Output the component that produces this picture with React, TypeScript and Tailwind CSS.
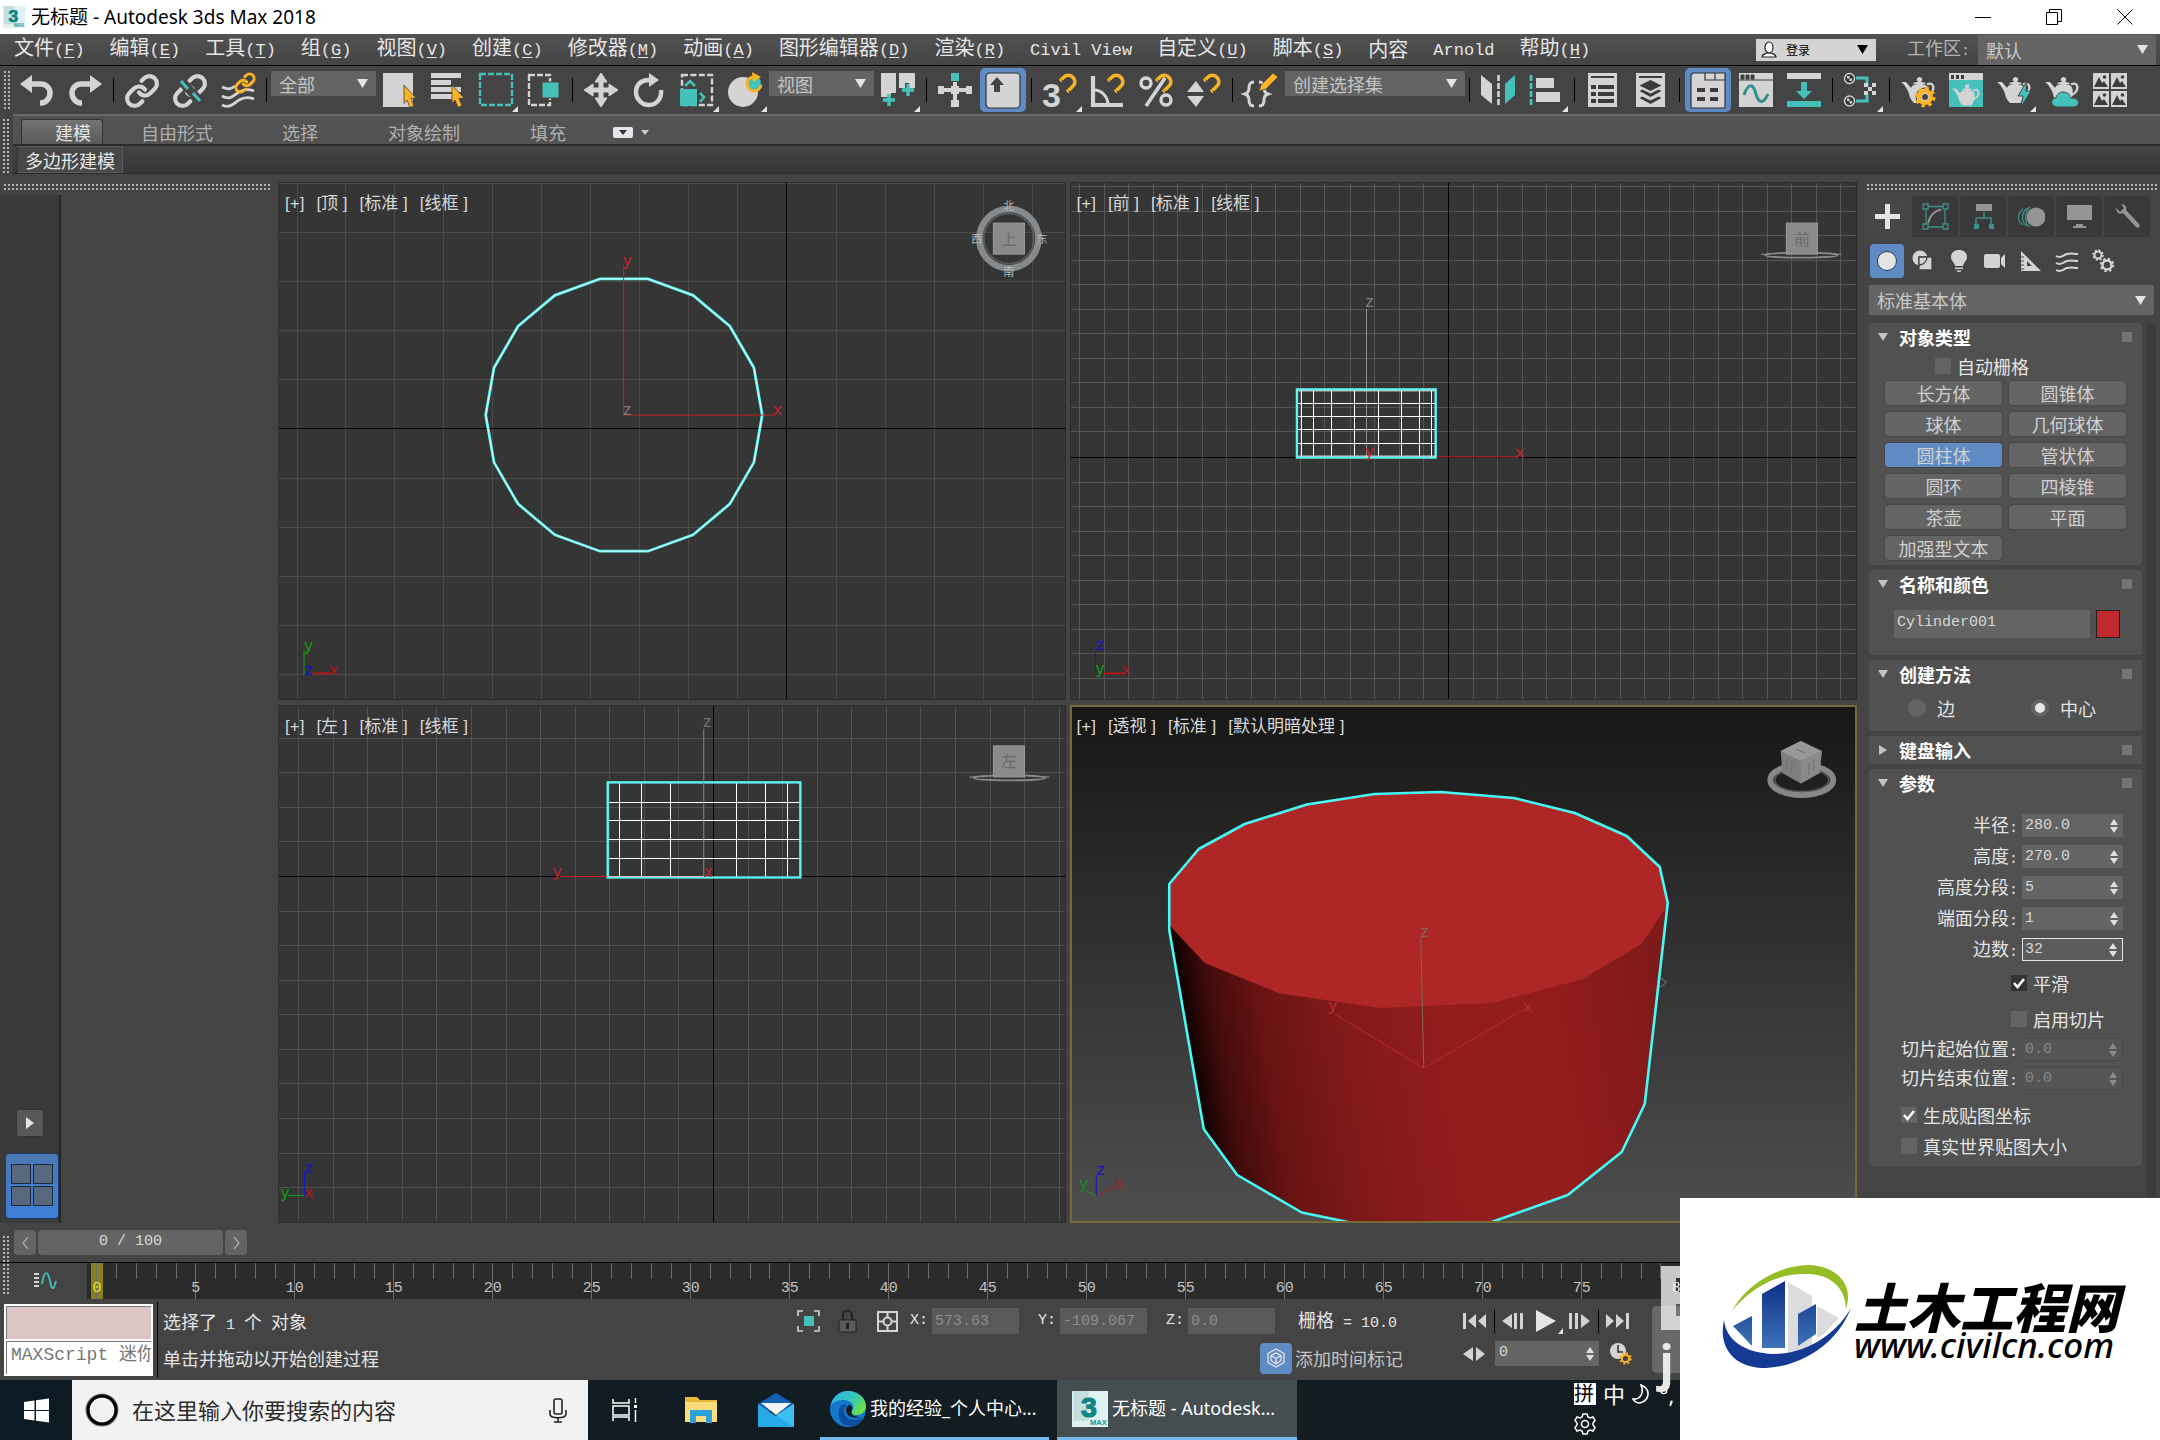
import React, { useState } from "react";
import { Link } from "lucide-react";

const L = "#d4d4d4";
const T = "#45c1bb";
const G = "#fcb424";
const BG = "#444444";

/* ---------- text ---------- */

function Mixed({ text, size = "sm" }: { text: string; size?: "sm" | "md" }) {
  const parts = text.split(/([\x20-\x7e]+)/).filter(Boolean);
  return (
    <span className="whitespace-pre">
      {parts.map((p, i) =>
        /[\x20-\x7e]/.test(p) ? (
          <span
            key={i}
            className={
              size === "md"
                ? "font-['Liberation_Mono',monospace] text-[17px]"
                : "font-['Liberation_Mono',monospace] text-[15px]"
            }
          >
            {p}
          </span>
        ) : (
          p
        )
      )}
    </span>
  );
}

function Dots({ className }: { className: string }) {
  return (
    <div
      className={
        "bg-[radial-gradient(circle,#b4b4b4_1px,transparent_1.5px)] bg-[size:4px_4px] " + className
      }
    />
  );
}

/* ---------- toolbar icons ---------- */

function Icon({ children, flyout }: { children: React.ReactNode; flyout?: boolean }) {
  return (
    <svg width="48" height="46" viewBox="-7 -6 48 46" aria-hidden="true">
      {children}
      {flyout && <path d="M33 39h6v-6Z" fill="#e4e4e4" />}
    </svg>
  );
}

const Magnet = () => (
  <g fill="none" stroke={G} strokeWidth="3.600">
    <path d="M17 8 21 4a6.500 6.500 0 0 1 10 8L24 19" />
    <path d="m25.500 17.500 1.800 2M18.500 6.500l1.500 2" stroke={BG} strokeWidth="1" />
  </g>
);

const Cursor = () => (
  <path d="m21 12 12 13-5 .5 3 7-4 2-3-7.500-3 3.500Z" fill={G} stroke={BG} strokeWidth=".8" />
);

const Pot = ({ fill = L }: { fill?: string }) => (
  <g>
    <circle cx="18.500" cy="6.500" r="2.600" fill={fill} />
    <path d="M12 11c1-3 12-3 13 0Z" fill={fill} />
    <path
      d="M0 9h5l5 6c1-3 4-4 8.500-4s8 1 9 5c1 5-1 10-4 14H13c-3-3-4.500-6-5-9C7 17 4 12 0 9Z"
      fill={fill}
    />
    <path d="M26 11.500c6-3 8 3 5 7-1 2-3 3-5 4" fill="none" stroke={fill} strokeWidth="2.200" />
  </g>
);

const icons: Record<string, React.ReactNode> = {
  undo: (
    <g>
      <path d="M0 11 12 2v18Z" fill={L} />
      <path d="M10 11h11c5 0 9 4 9 9s-4 10-9 10h-1" fill="none" stroke={L} strokeWidth="5.500" />
    </g>
  ),
  redo: (
    <g>
      <path d="M34 11 22 2v18Z" fill={L} />
      <path d="M24 11H13c-5 0-9 4-9 9s4 10 9 10h1" fill="none" stroke={L} strokeWidth="5.500" />
    </g>
  ),
  link: <Link x="-1" y="0" width="36" height="36" color={L} strokeWidth={2.8} />,
  unlink: (
    <g>
      <Link x="-1" y="0" width="36" height="36" color={L} strokeWidth={2.8} />
      <path d="m6 6 22 23" stroke={BG} strokeWidth="9" />
      <path d="m8 8 7 8M20 20l7 8" stroke={T} strokeWidth="3" />
    </g>
  ),
  bind: (
    <g>
      <g fill="none" stroke={L} strokeWidth="2.800">
        <path d="M1 14c7 3 9 2 13-1" />
        <path d="M1 23c8 5 12-1 17-4s10-3 15-1" />
        <path d="M1 32c8 4 12-2 17-5s10-3 15-1" />
      </g>
      <Link x="13" y="-1" width="22" height="22" color={G} strokeWidth={3.2} />
    </g>
  ),
  select: (
    <g>
      <path d="M0 0h30v34H0Z" fill={L} />
      <Cursor />
    </g>
  ),
  selectName: (
    <g>
      <path d="M0 0h30v5H0ZM0 7h20v5H0ZM0 14h30v5H0ZM0 21h22v5H0Z" fill={L} />
      <Cursor />
    </g>
  ),
  rect: (
    <rect x="1" y="1" width="32" height="31" fill="none" stroke={T} strokeWidth="2.400" strokeDasharray="6 2" />
  ),
  window: (
    <g>
      <rect x="2" y="2" width="21" height="30" fill="none" stroke={L} strokeWidth="2.400" strokeDasharray="6 2" />
      <path d="M15 9h17v16H15Z" fill={T} stroke={BG} strokeWidth="1" />
    </g>
  ),
  move: (
    <path
      d="m17 0 6 9h-4v6h6v-4l9 6-9 6v-4h-6v6h4l-6 9-6-9h4v-6H9v4l-9-6 9-6v4h6V9h-4Z"
      fill={L}
      stroke={L}
      strokeWidth="1"
    />
  ),
  rotate: (
    <g>
      <path d="M19 7C9 6 4 12 4 19s6 13 13 13 13-6 12-15" fill="none" stroke={L} strokeWidth="4.500" />
      <path d="m17 0 10 7-10 7Z" fill={L} />
    </g>
  ),
  scale: (
    <g>
      <rect x="2" y="2" width="30" height="30" fill="none" stroke={L} strokeWidth="2.400" strokeDasharray="6 2.400" />
      <path d="M0 16h17v17H0Z" fill={T} />
      <path d="m5 13 5-5 5 5M20 20l4 4-4 5" fill="none" stroke={T} strokeWidth="2.600" />
    </g>
  ),
  place: (
    <g>
      <ellipse cx="15" cy="19" rx="15" ry="15" fill={L} />
      <circle cx="26" cy="10" r="7.500" fill={T} stroke={BG} strokeWidth="1" />
      <path d="M25 4a7 7 0 1 0 8 8" fill="none" stroke={G} strokeWidth="3" />
      <path d="m24-1 9 5-8 5Z" fill={G} />
    </g>
  ),
  pivot: (
    <g>
      <path d="M0 0h15v20h-5v4H0ZM18 0h16v15h-6v-5h-4v5h-6Z" fill={L} />
      <path d="M8 21v12M2 27h12M27 11v12M21 17h12" stroke={T} strokeWidth="3.400" />
    </g>
  ),
  manip: (
    <g fill={L}>
      <path d="M13 0h8v8h-8Z" fill={T} />
      <path d="M15 9h4v20h-4ZM5 15h24v4H5ZM0 13h6v8H0ZM28 13h6v8h-6ZM13 27h8v7h-8ZM13 13h8v8h-8Z" />
    </g>
  ),
  keyToggle: (
    <g>
      <rect x="-6" y="-5" width="46" height="44" rx="5" fill="#5f8bc4" />
      <rect x="0" y="0" width="34" height="35" rx="4" fill={L} stroke="#333" strokeWidth="1.200" />
      <path d="m11 4 7 8h-4v7H8v-7H4Z" fill="#444" />
    </g>
  ),
  snap3: (
    <g>
      <text x="-1" y="34" fill={L} fontSize="34" fontWeight="700" fontFamily="'Liberation Sans', sans-serif">3</text>
      <Magnet />
    </g>
  ),
  angle: (
    <g>
      <path d="M2 3v29h30" fill="none" stroke={L} strokeWidth="4.200" />
      <path d="M3 17c8 0 14 7 14 15" fill="none" stroke={L} strokeWidth="3" />
      <Magnet />
    </g>
  ),
  percent: (
    <g>
      <circle cx="7" cy="10" r="5" fill="none" stroke={L} strokeWidth="3.400" />
      <circle cx="27" cy="27" r="5" fill="none" stroke={L} strokeWidth="3.400" />
      <path d="M7 33 26 5" stroke={L} strokeWidth="3.600" />
      <Magnet />
    </g>
  ),
  spinner: (
    <g>
      <path d="m9 8 8 11H0ZM9 34l8-11H0Z" fill={L} />
      <Magnet />
    </g>
  ),
  named: (
    <g>
      <path
        d="M10 9c-4 0-5 2-5 6 0 3-1 5-4 6 3 1 4 3 4 6 0 4 1 6 5 6M15 9c4 0 5 2 5 6 0 3 1 5 4 6-3 1-4 3-4 6 0 4-1 6-5 6"
        fill="none"
        stroke={L}
        strokeWidth="3"
      />
      <path d="m15 18 2-6L29 0l5 4-12 12Z" fill={G} stroke={BG} strokeWidth=".8" />
    </g>
  ),
  mirror: (
    <g>
      <path d="m0 2 11 9v20L0 22Z" fill={L} />
      <path d="m34 2-10 9v20l10-9Z" fill={T} />
      <path d="M17.500 2v31" stroke={L} strokeWidth="2.600" strokeDasharray="6 2" />
    </g>
  ),
  align: (
    <g>
      <path d="M2 2v31" stroke={T} strokeWidth="2.800" strokeDasharray="6 2" />
      <path d="M7 5h18v10H7ZM7 19h24v10H7Z" fill={L} />
    </g>
  ),
  list: (
    <g>
      <path d="M2 0h29v34H2Z" fill={L} />
      <path d="M5 3h23v2H5ZM5 12h5v4H5ZM12 12h16v4H12ZM5 19h5v4H5ZM12 19h16v4H12ZM5 26h5v4H5ZM12 26h16v4H12Z" fill="#3c3c3c" />
    </g>
  ),
  layers: (
    <g>
      <path d="M2 0h29v34H2Z" fill={L} />
      <path d="M5 3h23v2H5ZM16.500 7l11 5.500-11 5.500-11-5.500ZM5.500 18l3-1.500 8 4 8-4 3 1.500-11 6ZM5.500 25l3-1.500 8 4 8-4 3 1.500-11 6Z" fill="#3c3c3c" />
    </g>
  ),
  ribbon: (
    <g>
      <rect x="-6" y="-5" width="46" height="44" rx="5" fill="#5f8bc4" />
      <path d="M2 0h32v35H0V2Z" fill={L} stroke="#333" strokeWidth="1.200" />
      <path d="M14 0v7h20M24 0v7" fill="none" stroke="#333" strokeWidth="1.200" />
      <path d="M6 15h8v4H6ZM19 15h8v4h-8ZM6 24h8v4H6ZM19 24h8v4h-8Z" fill="#3c3c3c" />
    </g>
  ),
  curve: (
    <g>
      <path d="M0 0h34v34H0Z" fill={L} />
      <path d="M0 7h34M2 2h3v4H2ZM7 2h3v4H7ZM12 2h3v4h-3Z" fill="#3c3c3c" stroke="#3c3c3c" strokeWidth="1" />
      <path d="M5 22c4-12 9-12 12-1s8 9 12 0" fill="none" stroke="#2f8f8a" strokeWidth="3" />
    </g>
  ),
  schematic: (
    <g>
      <path d="M0 0h34v6H0Z" fill={L} />
      <path d="M0 28h34v6H0ZM14 9h6v9h5l-8 8-8-8h5Z" fill={T} />
    </g>
  ),
  material: (
    <g>
      <path d="M12 5h11v8M12 28h11v-7" fill="none" stroke={T} strokeWidth="3" />
      <circle cx="5.500" cy="5.500" r="5" fill="#333" stroke={L} strokeWidth="1.400" />
      <circle cx="5.500" cy="28" r="5" fill="#333" stroke={L} strokeWidth="1.400" />
      <path d="M3 3h2.500v2.500H3ZM5.500 5.500H8V8H5.500ZM3 25.500h2.500V28H3ZM5.500 28H8v2.500H5.500Z" fill={L} />
      <path d="M20 10h4v4h-4ZM28 10h4v4h-4ZM24 14h4v4h-4ZM20 18h4v4h-4ZM28 18h4v4h-4Z" fill={L} />
    </g>
  ),
  renderSetup: (
    <g>
      <Pot />
      <circle cx="24" cy="24" r="9" fill="none" stroke={BG} strokeWidth="1" />
      <circle cx="24" cy="24" r="6" fill={L} stroke={G} strokeWidth="4" />
      <circle cx="24" cy="24" r="9" fill="none" stroke={G} strokeWidth="3" strokeDasharray="3.500 3.570" />
      <circle cx="24" cy="24" r="3" fill="#444" />
    </g>
  ),
  frame: (
    <g>
      <path d="M0 0h34v34H0Z" fill={T} />
      <path d="M0 0h34v7H0Z" fill={L} />
      <path d="M2 2h3v4H2ZM7 2h3v4H7ZM12 2h3v4h-3Z" fill="#3c3c3c" />
      <g transform="translate(3 8) scale(.82)">
        <Pot />
      </g>
    </g>
  ),
  render: (
    <g>
      <Pot />
      <path d="m30 8-9 15h5l-2 11 10-16h-5Z" fill={T} stroke={BG} strokeWidth="1" />
    </g>
  ),
  cloud: (
    <g>
      <Pot />
      <path d="M13 34c-8 0-8-9-2-9 1-8 13-8 15 0 9-1 10 9 2 9Z" fill={T} stroke={BG} strokeWidth="1" />
    </g>
  ),
  gallery: (
    <g>
      {[
        [0, 0],
        [18, 0],
        [0, 18],
        [18, 18],
      ].map(([x, y]) => (
        <g key={x + "-" + y} transform={`translate(${x} ${y})`}>
          <path d="M0 0h16v16H0Z" fill={L} />
          <path d="m1 14 5-10 3 6 2-2 4 6Z" fill="#3c3c3c" />
          <circle cx="11.500" cy="4" r="1.800" fill="#3c3c3c" />
        </g>
      ))}
    </g>
  ),
};

function Tool({ name, label, flyout }: { name: string; label: string; flyout?: boolean }) {
  return (
    <button aria-label={label} className="w-12 shrink-0">
      <Icon flyout={flyout}>{icons[name]}</Icon>
    </button>
  );
}

function Sep() {
  return (
    <div className="flex w-[9px] shrink-0 justify-center">
      <div className="h-6 w-px bg-black" />
    </div>
  );
}

function Dropdown({
  label,
  value,
  className,
  arrow = "#e4e4e4",
}: {
  label: string;
  value: string;
  className: string;
  arrow?: string;
}) {
  return (
    <div className={"relative flex items-center " + className}>
      <select aria-label={label} className="h-full w-full appearance-none bg-transparent pl-2 outline-none">
        <option>{value}</option>
      </select>
      <svg className="pointer-events-none absolute right-2" width="11" height="9" viewBox="0 0 11 9" aria-hidden="true">
        <path d="M0 0h11L5.500 9Z" fill={arrow} />
      </svg>
    </div>
  );
}

/* ---------- header ---------- */

function AppLogo({ size }: { size: number }) {
  return (
    <svg width={size} height={size} viewBox="0 0 24 24" aria-hidden="true">
      <path d="M0 0h24v24H0Z" fill="#dff1f0" />
      <path d="M1 0h10v20H1Z" fill="#c4dfdd" />
      <text x="6" y="17" fill="#0f8586" stroke="#0f8586" strokeWidth=".8" fontSize="19" fontWeight="700" fontFamily="'Liberation Sans', sans-serif">
        3
      </text>
      <text x="12" y="22.500" fill="#0f9a98" fontSize="5" fontWeight="700" fontFamily="'Liberation Sans', sans-serif">
        MAX
      </text>
    </svg>
  );
}

function TitleBar() {
  return (
    <header className="flex h-[34px] items-center bg-white pl-[3px] text-black">
      <AppLogo size={22} />
      <h1 className="ml-[6px] font-['Noto_Sans','Noto_Sans_CJK_SC',sans-serif] text-[19px]">
        无标题 - Autodesk 3ds Max 2018
      </h1>
      <div className="ml-auto flex">
        <button aria-label="最小化" className="flex h-[34px] w-[71px] items-center justify-center">
          <svg width="16" height="16" viewBox="0 0 16 16"><path d="M0 8.500h16" stroke="#000" /></svg>
        </button>
        <button aria-label="还原" className="flex h-[34px] w-[71px] items-center justify-center">
          <svg width="16" height="16" viewBox="0 0 16 16" fill="none" stroke="#000">
            <path d="M.5 3.500h11v12H.5ZM3.500 3.500v-3h12v12h-4" />
          </svg>
        </button>
        <button aria-label="关闭" className="flex h-[34px] w-[71px] items-center justify-center">
          <svg width="16" height="16" viewBox="0 0 16 16"><path d="m.5.5 15 15m0-15-15 15" stroke="#000" /></svg>
        </button>
      </div>
    </header>
  );
}

const menus: [string, string?][] = [
  ["文件", "F"],
  ["编辑", "E"],
  ["工具", "T"],
  ["组", "G"],
  ["视图", "V"],
  ["创建", "C"],
  ["修改器", "M"],
  ["动画", "A"],
  ["图形编辑器", "D"],
  ["渲染", "R"],
  ["Civil View"],
  ["自定义", "U"],
  ["脚本", "S"],
  ["内容"],
  ["Arnold"],
  ["帮助", "H"],
];

function MenuBar() {
  return (
    <nav className="flex h-8 items-start border-b border-black bg-gradient-to-b from-[#525252] to-[#444] pl-[14px] text-[20px] leading-[26px] text-[#e6e6e6]">
      <div className="flex gap-[25px]">
        {menus.map(([name, key]) => (
          <button key={name} className="whitespace-nowrap">
            <Mixed text={name} size="md" />
            {key && (
              <span className="font-['Liberation_Mono',monospace] text-[17px]">
                (<u className="underline-offset-2">{key}</u>)
              </span>
            )}
          </button>
        ))}
      </div>
      <div className="ml-auto flex h-full items-center pr-1 text-[18px]">
        <div className="flex h-[22px] items-center bg-[#d4d4d4] pl-1 text-black">
          <svg width="18" height="18" viewBox="0 0 18 18" fill="#fff" stroke="#222" strokeWidth="1.200" aria-hidden="true">
            <path d="M2 16c0-3 3-3 5-4h4c2 1 5 1 5 4Z" />
            <ellipse cx="9" cy="6.500" rx="4" ry="5.500" />
          </svg>
          <Dropdown label="登录" value="登录" arrow="#000" className="h-full w-[98px] text-[12px] leading-[16px]" />
        </div>
        <label className="ml-[31px] mr-2 text-[#b4b4b4]"><Mixed text="工作区:" /></label>
        <Dropdown label="工作区" value="默认" className="h-[30px] w-[178px] bg-[#646464] text-[#c8c8c8]" />
      </div>
    </nav>
  );
}

function Toolbar() {
  return (
    <div className="flex h-12 items-center overflow-hidden bg-[#444] pl-[3px] text-[18px]">
      <Dots className="mr-[2px] h-10 w-2 shrink-0" />
      <Tool name="undo" label="撤消" />
      <Tool name="redo" label="重做" />
      <Sep />
      <Tool name="link" label="链接" />
      <Tool name="unlink" label="取消链接" />
      <Tool name="bind" label="绑定到空间扭曲" />
      <Sep />
      <Dropdown label="选择过滤器" value="全部" className="mb-[14px] h-[25px] w-[105px] shrink-0 bg-[#646464] text-[#c4c4c4]" />
      <Tool name="select" label="选择对象" />
      <Tool name="selectName" label="按名称选择" />
      <Tool name="rect" label="矩形选择区域" flyout />
      <Tool name="window" label="窗口/交叉" />
      <Sep />
      <Tool name="move" label="移动" />
      <Tool name="rotate" label="旋转" />
      <Tool name="scale" label="缩放" flyout />
      <Tool name="place" label="放置" flyout />
      <Dropdown label="参考坐标系" value="视图" className="mb-[14px] h-[25px] w-[105px] shrink-0 bg-[#646464] text-[#c4c4c4]" />
      <Tool name="pivot" label="使用轴点中心" flyout />
      <Sep />
      <Tool name="manip" label="选择并操纵" />
      <Tool name="keyToggle" label="键盘快捷键覆盖切换" />
      <Sep />
      <Tool name="snap3" label="捕捉开关" flyout />
      <Tool name="angle" label="角度捕捉" />
      <Tool name="percent" label="百分比捕捉" />
      <Tool name="spinner" label="微调器捕捉" />
      <Sep />
      <Tool name="named" label="编辑命名选择集" />
      <Dropdown label="命名选择集" value="创建选择集" className="mb-[14px] h-[25px] w-[180px] shrink-0 bg-[#646464] text-[#c4c4c4]" />
      <Sep />
      <Tool name="mirror" label="镜像" />
      <Tool name="align" label="对齐" flyout />
      <Sep />
      <Tool name="list" label="场景资源管理器" />
      <Tool name="layers" label="层资源管理器" />
      <Sep />
      <Tool name="ribbon" label="显示功能区" />
      <Tool name="curve" label="曲线编辑器" />
      <Tool name="schematic" label="图解视图" />
      <Sep />
      <Tool name="material" label="材质编辑器" flyout />
      <Sep />
      <Tool name="renderSetup" label="渲染设置" />
      <Tool name="frame" label="渲染帧窗口" />
      <Tool name="render" label="渲染产品" flyout />
      <Tool name="cloud" label="在线渲染" />
      <Tool name="gallery" label="打开库" />
    </div>
  );
}

function Ribbon() {
  return (
    <div className="flex bg-[#444] text-[18px] text-[#b0b0b0]">
      <Dots className="ml-[2px] mr-[3px] mt-1 h-[56px] w-2 shrink-0" />
      <div className="min-w-0 flex-1">
        <div className="flex h-8 items-end border-b-2 border-t-2 border-b-[#2c2c2c] border-t-[#6a6a6a] bg-[#525252] pl-2 leading-6">
          <button className="w-[82px] rounded-t-[3px] border border-b-0 border-[#333] bg-gradient-to-b from-[#747474] to-[#5a5a5a] pl-[33px] text-left text-[#e4e4e4]">
            建模
          </button>
          <button className="ml-[38px]">自由形式</button>
          <button className="ml-[69px]">选择</button>
          <button className="ml-[70px]">对象绘制</button>
          <button className="ml-[70px]">填充</button>
          <button aria-label="功能区选项" className="ml-[47px] flex h-6 items-center gap-2">
            <svg width="20" height="11" viewBox="0 0 20 11" aria-hidden="true">
              <rect width="20" height="11" rx="2" fill="#e4e8ee" />
              <path d="M6 3h8l-4 5Z" fill="#333" />
            </svg>
            <svg width="8" height="5" viewBox="0 0 8 5" aria-hidden="true"><path d="M0 0h8L4 5Z" fill="#ccc" /></svg>
          </button>
        </div>
        <div className="flex h-[28px] border-b border-[#2c2c2c] bg-gradient-to-b from-[#444] to-[#363636] pl-1">
          <button className="border border-[#5a5a5a] border-l-[#333] bg-[#484848] px-[7px] leading-[26px] text-[#e6e6e6]">
            多边形建模
          </button>
        </div>
      </div>
    </div>
  );
}

/* ---------- viewports ---------- */

function range(from: number, to: number, origin: number, step: number) {
  const out: number[] = [];
  for (let i = Math.ceil((from - origin) / step); origin + i * step <= to; i++) {
    if (i !== 0) out.push(Math.round(origin + i * step) + 0.5);
  }
  return out;
}

type Box = { x: number; y: number; w: number; h: number };

function Grid({ box, ox, oy, step, color }: { box: Box; ox: number; oy: number; step: number; color: string }) {
  return (
    <g shapeRendering="crispEdges">
      <g stroke={color}>
        {range(box.x, box.x + box.w, ox, step).map((x) => (
          <path key={"v" + x} d={`M${x} ${box.y}v${box.h}`} />
        ))}
        {range(box.y, box.y + box.h, oy, step).map((y) => (
          <path key={"h" + y} d={`M${box.x} ${y}h${box.w}`} />
        ))}
      </g>
      <path
        d={`M${Math.round(ox) + 0.5} ${box.y}v${box.h}M${box.x} ${Math.round(oy) + 0.5}h${box.w}`}
        stroke="#000"
      />
    </g>
  );
}

function Axis({ x, y, color, children }: { x: number; y: number; color: string; children: string }) {
  return (
    <text x={x} y={y} fill={color} textAnchor="middle" fontSize="17" fontFamily="'Liberation Sans', sans-serif">
      {children}
    </text>
  );
}

function CubeFace({ cx, cy, face }: { cx: number; cy: number; face: string }) {
  return (
    <g>
      <rect x={cx - 15.5} y={cy - 15.5} width="31" height="31" fill="#8a8a8a" stroke="#9c9c9c" />
      <text x={cx} y={cy + 6} fill="#666c74" textAnchor="middle" fontSize="16" fontFamily="'Noto Sans CJK SC', sans-serif">
        {face}
      </text>
    </g>
  );
}

function FlatRing({ cx, cy }: { cx: number; cy: number }) {
  return (
    <g>
      <ellipse cx={cx} cy={cy} rx="36" ry="2.500" fill="none" stroke="#8a8a8a" strokeWidth="1.600" />
      <path d={`M${cx - 40} ${cy - 1}h8M${cx + 32} ${cy - 1}h8`} stroke="#9a9a9a" />
    </g>
  );
}

function Viewport({
  box,
  labels,
  active,
  children,
}: {
  box: Box;
  labels: string[];
  active?: boolean;
  children: React.ReactNode;
}) {
  return (
    <section className="relative min-h-0 min-w-0 overflow-hidden bg-[#353535]">
      <svg
        className="absolute inset-0 h-full w-full"
        viewBox={`${box.x} ${box.y} ${box.w} ${box.h}`}
        preserveAspectRatio="xMidYMid slice"
        fill="none"
        aria-hidden="true"
      >
        {children}
      </svg>
      <div
        className={
          active
            ? "absolute inset-0 border-2 border-[#786a38]"
            : "absolute inset-0 border border-[#2c2c2c]"
        }
      />
      <div className="absolute left-[7px] top-[10px] flex gap-3 whitespace-pre font-['Liberation_Sans','Noto_Sans_CJK_SC',sans-serif] text-[17px] leading-6 text-[#d8d8d8]">
        {labels.map((l) => (
          <button key={l}>{l}</button>
        ))}
      </div>
    </section>
  );
}

const RED = "#c4242c";
const CY = "#5ef4f0";

function TopView() {
  const box = { x: 278, y: 183, w: 787, h: 517 };
  const pts = Array.from({ length: 18 }, (_, i) => {
    const a = (i * Math.PI) / 9;
    return `${(623.8 + 138 * Math.cos(a)).toFixed(1)},${(415.6 + 138 * Math.sin(a)).toFixed(1)}`;
  }).join(" ");
  return (
    <Viewport box={box} labels={["[+]", "[顶 ]", "[标准 ]", "[线框 ]"]}>
      <Grid box={box} ox={786} oy={429} step={48.95} color="#4b4b4b" />
      <polygon points={pts} stroke={CY} strokeWidth="2.800" />
      <polygon points={pts} stroke="#e8ffff" strokeWidth=".8" />
      <path d="M623.500 266v149.500H775" stroke={RED} />
      <Axis x={627} y={267} color={RED}>y</Axis>
      <Axis x={777} y={416} color={RED}>x</Axis>
      <Axis x={627} y={416} color="#7a7a7a">z</Axis>
      <path d="M304.500 650v25" stroke="#1a9a1a" />
      <path d="M313 673.500h20" stroke="#b01818" strokeWidth="2" />
      <Axis x={309} y={651} color="#12a012">y</Axis>
      <Axis x={309} y={675} color="#1414c8">z</Axis>
      <Axis x={334} y={675} color="#b01818">x</Axis>
      <circle cx="1008" cy="239.500" r="29.500" stroke="#868a8c" strokeWidth="6.500" />
      <circle cx="1008" cy="239.500" r="25" stroke="#5c6064" strokeWidth="1.500" />
      <CubeFace cx={1008} cy={239.5} face="上" />
      <g fill="#b4b8ba" fontSize="11" textAnchor="middle" fontFamily="'Noto Sans CJK SC', sans-serif">
        <text x="1008" y="211">北</text>
        <text x="1008" y="277">南</text>
        <text x="976" y="244">西</text>
        <text x="1041" y="244">东</text>
      </g>
    </Viewport>
  );
}

function FrontView() {
  const box = { x: 1069, y: 183, w: 788, h: 517 };
  return (
    <Viewport box={box} labels={["[+]", "[前 ]", "[标准 ]", "[线框 ]"]}>
      <Grid box={box} ox={1447} oy={457} step={24.52} color="#565656" />
      <g shapeRendering="crispEdges">
        <g stroke="#fff">
          {[1301.5, 1313.5, 1331.5, 1353.5, 1377.5, 1400.5, 1418.5, 1430.5].map((x) => (
            <path key={x} d={`M${x} 390v68`} />
          ))}
          {[404.5, 417.5, 430.5, 443.5].map((y) => (
            <path key={y} d={`M1297 ${y}h138`} />
          ))}
        </g>
        <path d="M1365.500 310v147" stroke="#909090" />
      </g>
      <rect x="1296.500" y="390" width="138.500" height="68" stroke={CY} strokeWidth="2.400" />
      <path d="M1298 391.500h136M1298 456.500h136" stroke="#fff" strokeWidth=".8" />
      <path d="M1436 457.500h81" stroke={RED} />
      <Axis x={1369} y={308} color="#808080">z</Axis>
      <Axis x={1369} y={457} color={RED}>y</Axis>
      <Axis x={1519} y={458} color={RED}>x</Axis>
      <path d="M1095.500 650v24" stroke="#1414c8" />
      <path d="M1104 673.500h20" stroke="#b01818" strokeWidth="2" />
      <Axis x={1100} y={650} color="#1414c8">z</Axis>
      <Axis x={1100} y={674} color="#12a012">y</Axis>
      <Axis x={1126} y={675} color="#b01818">x</Axis>
      <FlatRing cx={1800} cy={256} />
      <CubeFace cx={1800.5} cy={239.5} face="前" />
    </Viewport>
  );
}

function LeftView() {
  const box = { x: 278, y: 705, w: 787, h: 518 };
  return (
    <Viewport box={box} labels={["[+]", "[左 ]", "[标准 ]", "[线框 ]"]}>
      <Grid box={box} ox={713} oy={876} step={34.58} color="#505050" />
      <g stroke="#fff" shapeRendering="crispEdges">
        {[619.5, 641.5, 670.5, 736.5, 765.5, 787.5].map((x) => (
          <path key={x} d={`M${x} 782v95`} />
        ))}
        {[802.5, 820.5, 839.5, 858.5].map((y) => (
          <path key={y} d={`M608 ${y}h192`} />
        ))}
      </g>
      <rect x="607.500" y="782.500" width="192.500" height="95" stroke={CY} strokeWidth="2.400" />
      <path d="M703.500 729v147" stroke="#8a8a8a" />
      <path d="M608 876.500h96" stroke="#d8b8b8" />
      <path d="M560 876.500h47" stroke={RED} />
      <Axis x={707} y={727} color="#707070">z</Axis>
      <Axis x={557} y={877} color={RED}>y</Axis>
      <Axis x={708} y={877} color={RED}>x</Axis>
      <path d="M304.500 1172v24" stroke="#1414c8" />
      <path d="M288 1195.500h16" stroke="#12a012" />
      <Axis x={309} y={1173} color="#1414c8">z</Axis>
      <Axis x={285} y={1198} color="#12a012">y</Axis>
      <Axis x={309} y={1198} color="#b01818">x</Axis>
      <FlatRing cx={1009} cy={778} />
      <CubeFace cx={1008.5} cy={761.5} face="左" />
    </Viewport>
  );
}

const outline =
  "M1347 1222 1301 1212.500 1236.500 1175 1203 1129 1168.500 930V884L1198 849 1244 824 1306 804.500 1374 794 1440 792 1513 798 1574 813 1626 836 1659 867 1667 903 1644 1104 1621 1152 1567 1195 1491 1222";

function PerspectiveView() {
  const box = { x: 1069, y: 705, w: 788, h: 518 };
  return (
    <Viewport box={box} labels={["[+]", "[透视 ]", "[标准 ]", "[默认明暗处理 ]"]} active>
      <defs>
        <linearGradient id="sky" x1="0" y1="0" x2="0" y2="1">
          <stop offset="0" stopColor="#171716" />
          <stop offset=".5" stopColor="#333333" />
          <stop offset="1" stopColor="#4e4e4e" />
        </linearGradient>
        <linearGradient id="side" gradientUnits="userSpaceOnUse" x1="1184" y1="1030" x2="1665" y2="948">
          <stop offset="0" stopColor="#050000" />
          <stop offset=".02" stopColor="#1c0404" />
          <stop offset=".06" stopColor="#400b0b" />
          <stop offset=".16" stopColor="#681313" />
          <stop offset=".28" stopColor="#7c1818" />
          <stop offset=".4" stopColor="#8a1b1b" />
          <stop offset=".55" stopColor="#931d1d" />
          <stop offset=".75" stopColor="#931c1c" />
          <stop offset="1" stopColor="#7c1919" />
        </linearGradient>
      </defs>
      <rect x={box.x} y={box.y} width={box.w} height={box.h} fill="url(#sky)" />
      <path d={outline + "Z"} fill="url(#side)" />
      <path
        d="M1168.500 925V884L1198 849 1244 824 1306 804.500 1374 794 1440 792 1513 798 1574 813 1626 836 1659 867 1667 905 1641 944 1581 979.500 1491 1003 1380 1008 1279 993.500 1204 963Z"
        fill="#ae2626"
      />
      <path d={outline} stroke="#45fbf6" strokeWidth="2.600" strokeLinejoin="round" />
      <path d="m1423 1068-3-131" stroke="#7c6a5a" />
      <path d="m1334 1014 89 54 102-60" stroke="#b82a2a" />
      <Axis x={1424} y={937} color="#7e6460">z</Axis>
      <Axis x={1332} y={1011} color="#b83030">y</Axis>
      <Axis x={1527} y={1012} color="#a83030">x</Axis>
      <path d="m1660 978 6 4.500-7 5" stroke="#7a7a7a" />
      <path d="M1095.500 1175v21" stroke="#1414c8" />
      <path d="m1085 1190 10 6" stroke="#12a012" />
      <path d="m1096 1196 19-10" stroke="#b01818" />
      <Axis x={1100} y={1175} color="#1414c8">z</Axis>
      <Axis x={1083} y={1189} color="#1c8a2c">y</Axis>
      <Axis x={1119} y={1189} color="#b02020">x</Axis>
      <ellipse cx="1801" cy="780" rx="31.500" ry="15" stroke="#85878a" strokeWidth="6" />
      <ellipse cx="1801" cy="780" rx="27" ry="11.500" stroke="#585b60" strokeWidth="1.500" />
      <path d="m1800 741 21 10-2 22-19 10.500-18.500-10.500-1.500-22Z" fill="#7e7e7e" />
      <path d="m1800 741 21 10-21 10-20-10Z" fill="#989898" />
      <path d="m1800 761 21-10-2 22-19 10.500Z" fill="#8a8a8a" />
      <path d="M1786 758v12M1791 760v13M1808 762v13M1813 759v12M1795 749l9 4" stroke="#6c7074" />
    </Viewport>
  );
}

/* ---------- left strip ---------- */

function LeftPanel() {
  return (
    <aside className="flex w-[278px] shrink-0 flex-col pl-[3px] pr-2 pt-[9px]">
      <Dots className="h-2 w-full" />
      <div className="-ml-[3px] mt-1 flex w-[61px] flex-1 flex-col items-end border-r-2 border-[#262626] bg-[#3a3a3a]">
        <div className="flex-1" />
        <button aria-label="展开" className="mr-[15px] flex h-7 w-7 items-center justify-center rounded-[3px] border border-[#333] bg-[#585858]">
          <svg width="8" height="12" viewBox="0 0 8 12"><path d="m0 0 8 6-8 6Z" fill="#e4e4e4" /></svg>
        </button>
        <button
          aria-label="视口布局"
          className="mb-1 mt-4 grid h-[66px] w-[54px] grid-cols-2 gap-[2px] rounded-[4px] border border-[#1a3a6a] bg-gradient-to-b from-[#4a78b4] to-[#3f7fd8] px-[5px] pb-[13px] pt-[10px]"
        >
          {[0, 1, 2, 3].map((i) => (
            <span key={i} className="h-5 border border-[#1f2a38] bg-[#56687e]" />
          ))}
        </button>
      </div>
    </aside>
  );
}

/* ---------- command panel ---------- */

function Rollout({
  title,
  open = true,
  className = "",
  children,
}: {
  title: string;
  open?: boolean;
  className?: string;
  children?: React.ReactNode;
}) {
  return (
    <section className={"rounded-[3px] bg-[#515151] " + className}>
      <button aria-expanded={open} className="flex h-7 w-full items-center pl-[9px] pr-[10px]">
        <svg width="10" height="10" viewBox="0 0 10 10" aria-hidden="true">
          <path d={open ? "M0 1h10L5 9Z" : "M1 0v10l8-5Z"} fill="#c4c4c4" />
        </svg>
        <span className="ml-[11px] text-[18px] font-bold text-white">{title}</span>
        <span className="ml-auto h-[10px] w-[10px] bg-[radial-gradient(circle,#8c8c8c_0.5px,transparent_1px)] bg-[size:2px_2px]" />
      </button>
      {children}
    </section>
  );
}

function Check({ label, checked, dark, className = "" }: { label: string; checked?: boolean; dark?: boolean; className?: string }) {
  return (
    <label className={"flex h-5 items-center gap-[6px] text-[18px] text-[#e4e4e4] " + className}>
      <span className="relative flex">
        <input
          type="checkbox"
          defaultChecked={checked}
          className={"peer h-4 w-4 appearance-none " + (dark ? "bg-[#333]" : "bg-[#646464]")}
        />
        <svg
          className="pointer-events-none absolute left-[2px] top-[2px] hidden peer-checked:block"
          width="12"
          height="12"
          viewBox="0 0 12 12"
          aria-hidden="true"
        >
          <path d="m1 6 3.500 4L11 2" fill="none" stroke="#fff" strokeWidth="2.600" />
        </svg>
      </span>
      {label}
    </label>
  );
}

function SpinArrows({ dim }: { dim?: boolean }) {
  const fill = dim ? "#8a8a8a" : "#e0e0e0";
  return (
    <span className="flex flex-col gap-[2px]">
      <button aria-label="增加"><svg className="block" width="8" height="6" viewBox="0 0 8 6"><path d="M4 0l4 6H0Z" fill={fill} /></svg></button>
      <button aria-label="减少"><svg className="block" width="8" height="6" viewBox="0 0 8 6"><path d="M4 6l4-6H0Z" fill={fill} /></svg></button>
    </span>
  );
}

function Spin({ id, label, value, dim, focus }: { id: string; label: string; value: string; dim?: boolean; focus?: boolean }) {
  const [v, setV] = useState(value);
  return (
    <div className="flex h-[23px] items-center justify-end">
      <label htmlFor={id} className="mr-1 text-[18px] text-[#e4e4e4]"><Mixed text={label} /></label>
      <div
        className={
          "flex h-full w-[101px] items-center pr-[5px] " +
          (focus
            ? "border border-[#e4e4e4] bg-[#5c5c5c] pl-[2px]"
            : dim
              ? "border border-[#4a4a4a] bg-[#555] pl-[2px]"
              : "bg-[#646464] pl-[3px]")
        }
      >
        <input
          id={id}
          value={v}
          onChange={(e) => setV(e.target.value)}
          className={
            "min-w-0 flex-1 bg-transparent font-['Liberation_Mono',monospace] text-[15px] leading-5 outline-none " +
            (dim ? "text-[#8a8a8a]" : "text-[#d8d8d8]")
          }
        />
        <SpinArrows dim={dim} />
      </div>
    </div>
  );
}

const primitives = ["长方体", "圆锥体", "球体", "几何球体", "圆柱体", "管状体", "圆环", "四棱锥", "茶壶", "平面", "加强型文本"];

const tabs: [string, React.ReactNode][] = [
  ["创建", <path key="a" d="M10 0h5v10h10v5H15v10h-5V15H0v-5h10Z" fill="#e4e4e4" />],
  [
    "修改",
    <g key="b" fill="none" stroke="#3f8f8b" strokeWidth="1.300">
      <path d="M3 5v16M22 5v16M5 2.500h15M5 23h15" />
      <path d="M0 0h5v5H0ZM20 0h5v5h-5ZM0 20h5v5H0ZM20 20h5v5h-5Z" fill="#393939" />
      <path d="M5 19C7 11 11 7 18 5.500" stroke="#959595" strokeWidth="2" />
    </g>,
  ],
  [
    "层次",
    <g key="c">
      <path d="M5 0h16v7H5Z" fill="#959595" />
      <path d="M13 8v6M5 20v-6h15v6" fill="none" stroke="#3f8f8b" strokeWidth="1.500" />
      <path d="M3 20h5v5H3ZM18 20h5v5h-5Z" fill="#3f8f8b" />
    </g>,
  ],
  [
    "运动",
    <g key="d">
      <path d="M8 4C2 9 2 18 8 22M4 5C-2 10-2 17 4 21M11 3C5 8 5 19 11 23" fill="none" stroke="#3f8f8b" strokeWidth="1.300" />
      <circle cx="17" cy="13" r="9.500" fill="#959595" />
    </g>,
  ],
  ["显示", <path key="e" d="M0 1h25v15H0ZM9 20h7v2h3v2H6v-2h3Z" fill="#959595" />],
  [
    "实用程序",
    <path
      key="f"
      d="M1 4c0 4 3 7 7 5l13 14c2 2 5 0 3-3L11 6c1-3-1-6-5-6l3 4-4 4Z"
      fill="#959595"
    />,
  ],
];

const categories: [string, React.ReactNode][] = [
  ["几何体", <circle key="a" cx="12" cy="12" r="9.500" fill="#e4e4e4" stroke="#2c3f58" strokeWidth="1" />],
  [
    "图形",
    <g key="b">
      <circle cx="9" cy="9" r="7.500" fill={L} />
      <path d="M8 8h13v13H8Z" fill={L} stroke={BG} strokeWidth="1.300" />
      <path d="M8 16V8h8a8 8 0 0 1-8 8Z" fill={L} stroke={BG} strokeWidth="1.300" />
    </g>,
  ],
  ["灯光", <path key="c" d="M12 1c5 0 8 3 8 7s-4 6-4 9H8C8 14 4 12 4 8s3-7 8-7ZM8 18.500h8V20H8ZM9 21.500h6L13 23h-2Z" fill={L} />],
  ["摄影机", <path key="d" d="M3 5h12c1 0 2 1 2 2v10c0 1-1 2-2 2H3c-1 0-2-1-2-2V7c0-1 1-2 2-2ZM18 9l4-4v14l-4-4Z" fill={L} />],
  [
    "辅助对象",
    <g key="e">
      <path d="M2 2l20 20H2Zm6 10v5h5Z" fill={L} fillRule="evenodd" />
      <path d="M2 8h3M2 12h3M2 16h3M2 20h3" stroke={BG} strokeWidth="1.200" />
    </g>,
  ],
  [
    "空间扭曲",
    <path key="f" d="M1 7c5 3 7-1 11-2s7 0 11 0M1 14c5 3 7-1 11-2s7 0 11 0M1 21c5 3 7-1 11-2s7 0 11 0" fill="none" stroke={L} strokeWidth="2" />,
  ],
  [
    "系统",
    <g key="g" fill="none" stroke={L}>
      <circle cx="7" cy="6" r="3.500" strokeWidth="2" />
      <circle cx="7" cy="6" r="5" strokeWidth="1.500" strokeDasharray="2 1.900" />
      <circle cx="16" cy="16" r="4.500" strokeWidth="2.500" />
      <circle cx="16" cy="16" r="6.300" strokeWidth="1.800" strokeDasharray="2.500 2.450" />
    </g>,
  ],
];

function CommandPanel() {
  return (
    <aside className="flex w-[303px] shrink-0 flex-col pl-[9px] pt-[9px]">
      <Dots className="h-2 w-[292px]" />
      <div className="-ml-[2px] mt-[5px] flex h-[41px]" role="tablist">
        {tabs.map(([name, icon], i) => (
          <button
            key={name}
            role="tab"
            aria-selected={i === 0}
            aria-label={name}
            className={
              "mr-[2px] flex w-[46px] items-center justify-center rounded-t-[4px] " +
              (i === 0 ? "bg-[#464646]" : "bg-[#393939]")
            }
          >
            <svg width="27" height="27" viewBox="-1 -1 27 27">{icon}</svg>
          </button>
        ))}
      </div>
      <div className="flex h-12 items-center pl-1">
        {categories.map(([name, icon], i) => (
          <button
            key={name}
            aria-label={name}
            className={
              "mr-[2px] flex h-[34px] w-[34px] items-center justify-center rounded-[4px] " +
              (i === 0 ? "bg-[#5f8bc4]" : "")
            }
          >
            <svg width="24" height="24" viewBox="0 0 24 24">{icon}</svg>
          </button>
        ))}
      </div>
      <Dropdown label="类别" value="标准基本体" className="ml-[3px] mr-[6px] h-[30px] bg-[#646464] text-[18px] text-[#c8c8c8]" />
      <div className="mt-2 flex flex-1 pl-[3px]">
        <div className="flex w-[273px] flex-col gap-[5px]">
          <Rollout title="对象类型" className="pb-[5px]">
            <Check label="自动栅格" className="mb-[4px] mt-[5px] ml-[66px]" />
            <div className="mx-4 grid grid-cols-2 gap-[7px] pt-px">
              {primitives.map((p) => (
                <button
                  key={p}
                  className={
                    "h-6 rounded-[4px] text-[18px] leading-6 text-[#d0d0d0] shadow-[0_0_0_1px_#484848] " +
                    (p === "圆柱体" ? "bg-[#5f8bc4]" : "bg-[#646464]")
                  }
                >
                  {p}
                </button>
              ))}
            </div>
          </Rollout>
          <Rollout title="名称和颜色" className="pb-[17px]">
            <div className="mt-3 flex pl-[25px]">
              <input
                aria-label="名称"
                defaultValue="Cylinder001"
                className="h-7 w-[196px] bg-[#646464] px-[3px] pb-1 font-['Liberation_Mono',monospace] text-[15px] leading-5 text-[#d8d8d8] outline-none"
              />
              <button aria-label="颜色" className="ml-[6px] h-7 w-6 border border-[#222] bg-[#c02a2e]" />
            </div>
          </Rollout>
          <Rollout title="创建方法">
            <div className="flex h-[43px] items-center pb-[3px] text-[18px] text-[#e4e4e4]">
              <label className="flex w-[124px] items-center gap-[11px] pl-[39px]">
                <input type="radio" name="method" className="h-[18px] w-[18px] appearance-none rounded-full bg-[#646464]" />
                边
              </label>
              <label className="flex items-center gap-[11px] pl-[38px]">
                <input
                  type="radio"
                  name="method"
                  defaultChecked
                  className="h-[18px] w-[18px] appearance-none rounded-full border-4 border-[#646464] checked:bg-[#e8e8e8]"
                />
                中心
              </label>
            </div>
          </Rollout>
          <Rollout title="键盘输入" open={false} />
          <Rollout title="参数" className="pb-[10px]">
            <div className="flex flex-col pr-[19px] pt-[17px]">
              <div className="flex flex-col gap-2">
                <Spin id="radius" label="半径:" value="280.0" />
                <Spin id="height" label="高度:" value="270.0" />
                <Spin id="hseg" label="高度分段:" value="5" />
                <Spin id="cseg" label="端面分段:" value="1" />
                <Spin id="sides" label="边数:" value="32" focus />
              </div>
              <Check label="平滑" checked dark className="ml-[142px] mt-3" />
              <Check label="启用切片" className="ml-[142px] mt-4" />
              <div className="mt-[9px] flex flex-col gap-[6px]">
                <Spin id="from" label="切片起始位置:" value="0.0" dim />
                <Spin id="to" label="切片结束位置:" value="0.0" dim />
              </div>
              <Check label="生成贴图坐标" checked className="ml-8 mt-[15px]" />
              <Check label="真实世界贴图大小" className="ml-8 mt-[11px]" />
            </div>
          </Rollout>
        </div>
        <div className="ml-1 w-[10px] bg-[#3c3c3c]" />
      </div>
    </aside>
  );
}

/* ---------- time line and status ---------- */

function TimeSlider() {
  return (
    <div className="flex h-[39px] items-center gap-[2px] bg-[#444] pl-[14px] text-[#d8d8d8]">
      <button aria-label="上一帧" className="flex h-[25px] w-[22px] items-center justify-center rounded-[4px] bg-[#646464]">
        <svg width="7" height="12" viewBox="0 0 7 12"><path d="M6 0 1 6l5 6" fill="none" stroke="#aaa" strokeWidth="1.300" /></svg>
      </button>
      <button className="h-[25px] w-[185px] rounded-[4px] bg-[#646464] font-['Liberation_Mono',monospace] text-[15px]">
        0 / 100
      </button>
      <button aria-label="下一帧" className="flex h-[25px] w-[22px] items-center justify-center rounded-[4px] bg-[#646464]">
        <svg width="7" height="12" viewBox="0 0 7 12"><path d="m1 0 5 6-5 6" fill="none" stroke="#aaa" strokeWidth="1.300" /></svg>
      </button>
    </div>
  );
}

function TimeLine() {
  return (
    <div className="flex h-[37px] border-t border-black bg-[#444]">
      <button aria-label="打开迷你曲线编辑器" className="flex w-[87px] items-center pl-[33px]">
        <svg width="24" height="18" viewBox="0 0 24 18">
          <path d="M1 1h5v2H1ZM1 5h5v2H1ZM1 9h5v2H1ZM1 13h5v2H1Z" fill={L} />
          <path d="M9 12c2-14 6-14 8-3s4 8 6 0" fill="none" stroke={T} strokeWidth="1.800" />
        </svg>
      </button>
      <div className="flex flex-1 bg-[#2b2b2b] pr-[74px]">
        {Array.from({ length: 101 }, (_, i) => (
          <div key={i} className="relative flex min-w-0 flex-1 flex-col items-center">
            {i === 0 && <span className="absolute inset-y-0 left-1 w-3 bg-[#87801c]" />}
            <span className={"relative w-px bg-[#6c6c6c] " + (i % 5 === 0 ? "h-full" : "h-4")} />
            {i % 5 === 0 && i <= 80 && (
              <span
                className={
                  "absolute bottom-0 font-['Liberation_Mono',monospace] text-[15px] leading-[20px] " +
                  (i === 0 ? "text-[#e6dc3c]" : i === 80 ? "z-10 text-[#f0f0f0]" : "text-[#c4c4c4]")
                }
              >
                {i}
              </span>
            )}
          </div>
        ))}
      </div>
    </div>
  );
}

function Coord({ axis, value }: { axis: string; value: string }) {
  return (
    <label className="mr-[19px] flex items-center gap-1 font-['Liberation_Mono',monospace] text-[15px] text-[#e4e4e4]">
      {axis}:
      <input
        defaultValue={value}
        className="h-[26px] w-[87px] bg-[#5a5a5a] px-[3px] text-[15px] text-[#8e8e8e] outline-none"
      />
    </label>
  );
}

function StatusBar() {
  return (
    <div className="flex h-[81px] bg-[#444] text-[18px] text-[#e4e4e4]">
      <div className="ml-1 mt-[5px] flex h-[72px] w-[149px] flex-col gap-[2px] border-2 border-white bg-white">
        <div className="h-[33px] border-l border-t border-[#777] bg-[#dcc5c5]" />
        <input
          aria-label="MAXScript 迷你侦听器"
          defaultValue="MAXScript 迷你侦听器"
          className="h-[33px] w-full border-l border-t border-[#777] bg-white pb-3 pl-1 font-['Liberation_Mono','Noto_Sans_CJK_SC',monospace] text-[18px] leading-5 text-[#777] outline-none"
        />
      </div>
      <div className="ml-1 mt-[3px] h-[75px] w-px bg-black" />
      <div className="ml-[5px] flex w-[634px] flex-col gap-[13px] pt-[10px]">
        <p className="h-6 leading-6"><Mixed text="选择了 1 个 对象" /></p>
        <p className="h-6 leading-6">单击并拖动以开始创建过程</p>
      </div>
      <div className="flex w-[666px] flex-col">
        <div className="mt-[9px] flex h-[26px] items-center">
          <button aria-label="孤立当前选择切换" className="mr-[18px]">
            <svg className="block" width="23" height="22" viewBox="0 0 23 22" fill="none" stroke={L} strokeWidth="1.600">
              <path d="M1 6V1h5M17 1h5v5M22 16v5h-5M6 21H1v-5" />
              <path d="M7 6h10v10H7Z" fill={T} stroke="none" />
            </svg>
          </button>
          <button aria-label="选择锁定切换" className="mr-5">
            <svg className="block" width="19" height="24" viewBox="0 0 19 24">
              <path d="M5 11V6c0-6 9-6 9 0v5" fill="none" stroke="#222" strokeWidth="2" />
              <path d="M1 11h17v12H1Z" fill="#5a5a5a" stroke="#222" />
              <path d="M8 14h3v6H8Z" fill="#222" />
            </svg>
          </button>
          <button aria-label="绝对模式变换输入" className="mr-3">
            <svg className="block" width="21" height="21" viewBox="0 0 21 21" fill="none" stroke={L} strokeWidth="2">
              <path d="M1 1h19v19H1ZM10.500 1v5M10.500 15v5M1 10.500h5M15 10.500h5" />
              <circle cx="10.500" cy="10.500" r="4" />
            </svg>
          </button>
          <Coord axis="X" value="573.63" />
          <Coord axis="Y" value="-109.067" />
          <Coord axis="Z" value="0.0" />
          <span className="ml-1 whitespace-nowrap"><Mixed text="栅格 = 10.0" /></span>
        </div>
        <div className="mt-2 flex h-8 items-center pl-[463px] text-[#c4c4c4]">
          <button aria-label="自适应降级" className="flex h-[31px] w-8 items-center justify-center rounded-[4px] bg-[#5f8bc4]">
            <svg width="20" height="20" viewBox="0 0 20 20" fill="none" stroke="#e4e4e4" strokeWidth="1.300">
              <path d="m10 1 8 4.500v9L10 19l-8-4.500v-9Z" />
              <path d="m5 7.500 5 3 5-3M10 10.500V16M5 7.500v5l5 3.500 5-3.500v-5l-5-2.500Z" />
            </svg>
          </button>
          <button className="ml-[3px] whitespace-nowrap">添加时间标记</button>
        </div>
      </div>
      <div className="flex w-[190px] flex-col">
        <div className="mt-2 flex h-[28px] items-center">
          <button aria-label="转至开头"><svg className="block" width="24" height="16" viewBox="0 0 24 16"><path d="M0 0h3v16H0ZM13 1v14L5 8ZM23 1v14l-8-7Z" fill={L} /></svg></button>
          <span className="mx-[7px] h-6 w-px bg-black" />
          <button aria-label="上一帧"><svg className="block" width="22" height="16" viewBox="0 0 22 16"><path d="M10 1v14L0 8ZM12 0h3v16h-3ZM18 0h3v16h-3Z" fill={L} /></svg></button>
          <button aria-label="播放动画" className="ml-3"><svg className="block" width="28" height="28" viewBox="0 0 28 28"><path d="M0 3 20 14 0 25ZM22 27h5v-6Z" fill="#e4e4e4" /></svg></button>
          <button aria-label="下一帧" className="ml-[5px]"><svg className="block" width="22" height="16" viewBox="0 0 22 16"><path d="M0 0h3v16H0ZM6 0h3v16H6ZM12 1v14l9-7Z" fill={L} /></svg></button>
          <span className="mx-[7px] h-6 w-px bg-black" />
          <button aria-label="转至结尾"><svg className="block" width="24" height="16" viewBox="0 0 24 16"><path d="M0 1v14l8-7ZM10 1v14l8-7ZM20 0h3v16h-3Z" fill={L} /></svg></button>
        </div>
        <div className="mt-[6px] flex h-[25px] items-center">
          <button aria-label="关键点模式切换"><svg className="block" width="24" height="14" viewBox="0 0 24 14"><path d="M10 0v14L0 7ZM13 0v14l9-7Z" fill={L} /></svg></button>
          <div className="ml-2 flex h-[25px] w-[104px] items-center bg-[#646464] pl-1 pr-[5px]">
            <input
              aria-label="当前帧"
              defaultValue="0"
              className="min-w-0 flex-1 bg-transparent font-['Liberation_Mono',monospace] text-[15px] text-[#d8d8d8] outline-none"
            />
            <SpinArrows />
          </div>
          <button aria-label="时间配置" className="ml-[11px]">
            <svg className="block" width="22" height="22" viewBox="0 0 22 22">
              <circle cx="8" cy="8" r="8" fill={L} />
              <path d="M8 2v7h5" fill="none" stroke="#333" strokeWidth="1.600" />
              <circle cx="15.500" cy="15.500" r="3.600" fill={BG} stroke={G} strokeWidth="2" />
              <circle cx="15.500" cy="15.500" r="5.300" fill="none" stroke={G} strokeWidth="1.800" strokeDasharray="2 2.160" />
            </svg>
          </button>
        </div>
      </div>
    </div>
  );
}

/* ---------- task bar ---------- */

function TaskBar() {
  return (
    <footer className="flex h-[60px] bg-gradient-to-r from-[#0c1a24] via-[#141d22] to-[#121a20] font-['Noto_Sans','Noto_Sans_CJK_SC',sans-serif] text-white">
      <button aria-label="开始" className="flex w-[72px] items-center justify-center">
        <svg width="25" height="25" viewBox="0 0 25 25" fill="#fff">
          <path d="M0 4 10.500 2.500V12H0ZM12 2.300 25 .5V12H12ZM0 13h10.500v9.500L0 21ZM12 13h13v11.500L12 22.700Z" />
        </svg>
      </button>
      <label className="flex w-[516px] items-center bg-[#f2f2f2] pl-[13px] pr-[21px]">
        <svg width="34" height="34" viewBox="0 0 34 34" fill="none" aria-hidden="true">
          <circle cx="17" cy="17" r="14.500" stroke="#777" strokeWidth="4" />
          <circle cx="17" cy="17" r="14" stroke="#000" strokeWidth="3" />
        </svg>
        <input
          aria-label="搜索"
          placeholder="在这里输入你要搜索的内容"
          className="ml-[13px] min-w-0 flex-1 bg-transparent text-[22px] outline-none placeholder:text-[#2c2c2c]"
        />
        <svg width="18" height="25" viewBox="0 0 18 25" fill="none" stroke="#222" strokeWidth="1.600" aria-hidden="true">
          <rect x="5" y="1" width="8" height="15" rx="2" />
          <path d="M1 12v4c0 5 16 5 16 0v-4M9 20v4M5 24h8" />
        </svg>
      </label>
      <button aria-label="任务视图" className="ml-6 self-center">
        <svg width="25" height="24" viewBox="0 0 25 24" fill="none" stroke="#fff" strokeWidth="1.500">
          <path d="M1 1v4h16V1M1 8h16v9H1ZM1 23v-4h16v4M23.500 0v5M23.500 12v12" />
          <path d="M22 7h3v3h-3Z" fill="#fff" stroke="none" />
        </svg>
      </button>
      <button aria-label="文件资源管理器" className="ml-12 self-center">
        <svg width="33" height="28" viewBox="0 0 33 28">
          <path d="M0 1h12l3 3h17v22H0Z" fill="#e8b93e" />
          <path d="M0 6h32v20H0Z" fill="#fbdc7c" />
          <path d="M5 14h22v13h-6v-7H11v7H5Z" fill="#2ca2dc" />
        </svg>
      </button>
      <button aria-label="邮件" className="ml-[40px] self-center">
        <svg width="36" height="34" viewBox="0 0 36 34">
          <path d="M0 11 18 0l18 11v7H0Z" fill="#1261b4" />
          <path d="M0 11l18 12 18-12v23H0Z" fill="#27a9e6" />
          <path d="M3 10h30l-15 12Z" fill="#f4f4f4" />
          <path d="m18 22 18 12V11Z" fill="#3cc0f2" />
        </svg>
      </button>
      <button className="ml-[26px] flex w-[229px] items-center border-b-[3px] border-[#76b9ed] pl-[10px] text-[18px]">
        <svg width="36" height="36" viewBox="0 0 36 36" aria-hidden="true">
          <defs>
            <linearGradient id="edge-a" x1="0" y1="0" x2="1" y2=".6">
              <stop offset="0" stopColor="#2ab2e8" />
              <stop offset=".6" stopColor="#35c8b8" />
              <stop offset="1" stopColor="#6ae04a" />
            </linearGradient>
          </defs>
          <circle cx="18" cy="18" r="18" fill="#1477cc" />
          <path d="M1 14C3 5 10 0 18 0c10 0 18 7 18 15 0 6-5 9-9 9-5 0-7-2-5-4 4-5-1-11-8-11C8 9 3 11 1 14Z" fill="url(#edge-a)" />
          <path d="M14 13c-6 2-8 13-1 20 8 5 16 1 20-6-8 4-19 2-19-7 0-3 1-5 3-6Z" fill="#0d4f9c" />
          <path d="M19 14c-4 2-4 8 0 11 4 2 8 2 11 1-9 0-9-5-8-7 1-3-1-5-3-5Z" fill="#141d22" />
        </svg>
        <span className="ml-1 whitespace-nowrap">我的经验_个人中心...</span>
      </button>
      <button className="ml-2 flex w-[240px] items-center border-b-[3px] border-[#76b9ed] bg-[#444d50] pl-[15px] text-[18px]">
        <AppLogo size={36} />
        <span className="ml-1 whitespace-nowrap">无标题 - Autodesk...</span>
      </button>
      <div className="ml-[277px] flex flex-col pt-[3px]">
        <div className="flex items-center gap-[7px] whitespace-nowrap text-[22px] leading-[22px]">
          <span className="w-[22px] bg-white text-[20px] text-black">拼</span>
          <span>中</span>
          <svg width="20" height="20" viewBox="0 0 20 20" fill="none" stroke="#fff" strokeWidth="1.600" aria-hidden="true">
            <path d="M9 1c10 4 9 15-1 18-4 0-6-2-7-4 8 1 11-7 8-14Z" />
          </svg>
          <span>°,</span>
        </div>
        <button aria-label="设置" className="mt-2 w-[22px]">
          <svg width="22" height="22" viewBox="0 0 22 22" fill="none" stroke="#fff" strokeWidth="1.500">
            <path d="M9 1h4l1 3 2 1 3-1 2 3.500L19 10v2l2 2.500-2 3.500-3-1-2 1-1 3H9l-1-3-2-1-3 1-2-3.500L3 12v-2L1 7.500 3 4l3 1 2-1Z" />
            <circle cx="11" cy="11" r="3.500" />
          </svg>
        </button>
      </div>
    </footer>
  );
}

/* ---------- site badge ---------- */

function SiteBadge() {
  return (
    <>
      <div className="pointer-events-none fixed bottom-[110px] right-[480px] flex h-16 w-[19px] flex-col items-end justify-between bg-[#c8c8c8] pb-[14px] pt-3">
        <span className="h-[14px] w-1 bg-[#333]" />
        <span className="h-3 w-1 bg-[#555]" />
      </div>
      <div className="pointer-events-none fixed bottom-[67px] right-[480px] h-[67px] w-7 rounded-l-[5px] bg-white/20" />
      <div className="pointer-events-none fixed bottom-[50px] right-[486px] font-['Open_Sans',sans-serif] text-[48px] font-bold leading-[56px] text-[#e8e8e8]">
        j
      </div>
      <a
        href="#civilcn"
        className="fixed bottom-0 right-0 z-20 flex h-[242px] w-[480px] items-center bg-white pl-[42px] text-black"
      >
        <svg width="132" height="104" viewBox="0 0 132 104" className="mb-1 shrink-0" aria-hidden="true">
          <defs>
            <linearGradient id="tower" x1="0" y1="0" x2="0" y2="1">
              <stop offset="0" stopColor="#0e2f86" />
              <stop offset="1" stopColor="#3f74b8" />
            </linearGradient>
          </defs>
          <path d="M66 17 90 31v58H66ZM95 41l22 12-16 17-6 3Z" fill="#dcdcde" />
          <path d="M40 29 63 16v67H40ZM76 49l18-10v30l-18 12ZM11 61l19-10v30Z" fill="url(#tower)" />
          <path d="M10 46C24 20 56 0 88 0c28 2 44 20 36 44C124 22 106 8 84 9 54 8 28 24 10 46Z" fill="#94bd26" />
          <path d="M2 55c-6 28 10 48 42 48 38-2 72-26 85-60-16 28-46 46-78 46C24 88 4 76 2 55Z" fill="#143a94" />
        </svg>
        <span className="flex flex-col">
          <span className="whitespace-nowrap font-['Noto_Sans_CJK_SC',sans-serif] text-[53px] font-black italic leading-[52px]">
            土木工程网
          </span>
          <span className="whitespace-nowrap font-['Noto_Sans',sans-serif] text-[35px] font-medium italic leading-[28px]">
            www.civilcn.com
          </span>
        </span>
      </a>
    </>
  );
}

export default function App() {
  return (
    <div className="flex min-h-screen flex-col overflow-hidden bg-[#444] font-['Noto_Sans_CJK_SC',sans-serif]">
      <TitleBar />
      <MenuBar />
      <Toolbar />
      <Ribbon />
      <main className="flex flex-1">
        <LeftPanel />
        <div className="mt-2 grid min-w-0 flex-1 grid-cols-2 grid-rows-2 gap-x-1 gap-y-[5px]">
          <TopView />
          <FrontView />
          <LeftView />
          <PerspectiveView />
        </div>
        <CommandPanel />
      </main>
      <div className="relative">
        <TimeSlider />
        <TimeLine />
        <Dots className="absolute left-[2px] top-3 h-[60px] w-2" />
      </div>
      <StatusBar />
      <TaskBar />
      <SiteBadge />
    </div>
  );
}
